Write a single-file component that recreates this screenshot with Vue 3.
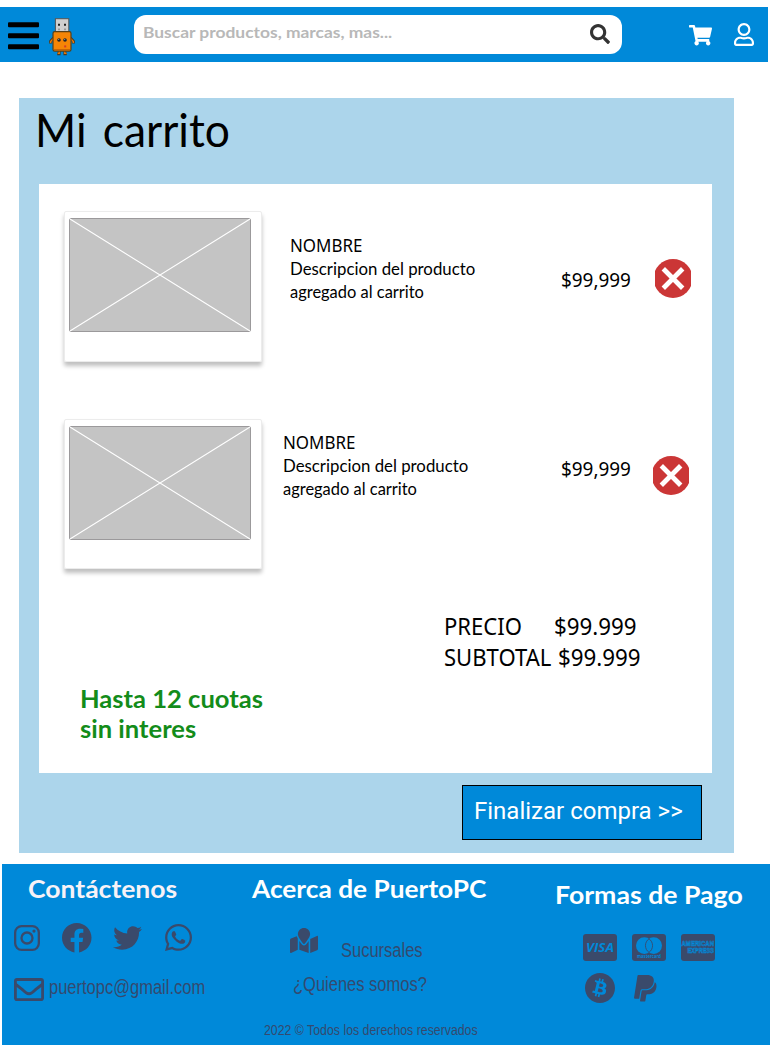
<script setup>
const items = [
  { id: 1, name: 'NOMBRE', line1: 'Descripcion del producto', line2: 'agregado al carrito', price: '$99,999' },
  { id: 2, name: 'NOMBRE', line1: 'Descripcion del producto', line2: 'agregado al carrito', price: '$99,999' },
]
</script>

<template>
  <div class="page">
    <header class="topbar">
      <svg class="menu" viewBox="0 0 31 28">
        <rect x="0" y="0.2" width="31" height="5" rx="1" />
        <rect x="0" y="11.2" width="31" height="5" rx="1" />
        <rect x="0" y="22.2" width="31" height="5" rx="1" />
      </svg>
      <svg class="mascot" viewBox="0 0 26 37">
        <path d="M4.5 20 L1.5 23.2 L1.5 25.5 M21.5 20 L24.5 23.2 L24.5 25.5" stroke="#4a3a20" stroke-width="2.8" fill="none" />
        <path d="M4.5 20.5 L1.7 23.5 L1.6 25 M21.5 20.5 L24.3 23.5 L24.4 25" stroke="#e8790a" stroke-width="1.5" fill="none" />
        <path d="M10.2 32v3.8H8.2M15.8 32v3.8h2" stroke="#4a3a20" stroke-width="2.8" fill="none" />
        <path d="M10.2 32v3.4H8.6M15.8 32v3.4h1.8" stroke="#e8790a" stroke-width="1.4" fill="none" />
        <rect x="6.4" y="0.7" width="13.4" height="14" fill="#cfcfcf" stroke="#555" stroke-width="1" />
        <path d="M9 5.8h2v2H9zM15 5.8h2v2h-2z" fill="#222" />
        <path d="M9 10.6h2v1.6H9zM15 10.6h2v1.6h-2z" fill="#999" />
        <rect x="4" y="13.7" width="18" height="19.4" rx="1.6" fill="#f58506" stroke="#574019" stroke-width="1.2" />
        <path d="M5 31.6h16" stroke="#c76505" stroke-width="1.2" />
        <circle cx="10" cy="22" r="1.8" fill="#20242b" />
        <circle cx="16" cy="22" r="1.8" fill="#20242b" />
        <path d="M9.2 21h1v1h-1zM15.2 21h1v1h-1z" fill="#8a9aa5" />
        <rect x="15.2" y="27.4" width="2" height="2" fill="#d43a2a" />
      </svg>
      <div class="search">
        <span class="t placeholder">Buscar productos, marcas, mas...</span>
        <svg class="lens" viewBox="0 0 512 512"><path fill="#333" d="M505 442.7L405.3 343c-4.500-4.500-10.600-7-17-7H372c27.600-35.300 44-79.700 44-128C416 93.100 322.900 0 208 0S0 93.100 0 208s93.100 208 208 208c48.300 0 92.700-16.400 128-44v16.300c0 6.400 2.500 12.500 7 17l99.700 99.700c9.400 9.400 24.600 9.400 33.900 0l28.300-28.300c9.400-9.400 9.400-24.600.1-34zM208 336c-70.700 0-128-57.200-128-128 0-70.700 57.200-128 128-128 70.700 0 128 57.200 128 128 0 70.700-57.200 128-128 128z" /></svg>
      </div>
      <svg class="cart" viewBox="0 0 576 512"><path fill="#fff" d="M528.12 301.319l47.273-208C578.806 78.301 567.391 64 551.99 64H159.208l-9.166-44.81C147.758 8.021 137.93 0 126.529 0H24C10.745 0 0 10.745 0 24v16c0 13.255 10.745 24 24 24h69.883l70.248 343.435C147.325 417.1 136 435.222 136 456c0 30.928 25.072 56 56 56s56-25.072 56-56c0-15.674-6.447-29.835-16.824-40h209.647C430.447 426.165 424 440.326 424 456c0 30.928 25.072 56 56 56s56-25.072 56-56c0-22.172-12.888-41.332-31.579-50.405l5.517-24.276c3.413-15.018-8.002-29.319-23.403-29.319H218.117l-6.545-32h293.145c11.206 0 20.92-7.754 23.403-18.681z" /></svg>
      <svg class="user" viewBox="0 0 448 512"><path fill="#fff" d="M313.600 304c-28.700 0-42.500 16-89.600 16-47.100 0-60.800-16-89.600-16C60.200 304 0 364.200 0 438.400V464c0 26.500 21.500 48 48 48h352c26.500 0 48-21.500 48-48v-25.600c0-74.200-60.200-134.400-134.400-134.400zM400 464H48v-25.600c0-47.600 38.800-86.400 86.400-86.400 14.600 0 38.300 16 89.600 16 51.700 0 74.900-16 89.600-16 47.600 0 86.400 38.800 86.400 86.400V464zM224 288c79.500 0 144-64.500 144-144S303.500 0 224 0 80 64.500 80 144s64.500 144 144 144zm0-240c52.900 0 96 43.100 96 96s-43.100 96-96 96-96-43.100-96-96 43.100-96 96-96z" /></svg>
    </header>

    <main class="panel">
      <h1 class="t title">Mi carrito</h1>
      <section class="sheet">
        <article v-for="item in items" :key="item.id" class="item" :class="`item-${item.id}`">
          <div class="photo">
            <svg class="cross" viewBox="0 0 182 114">
              <rect x="0.5" y="0.5" width="181" height="113" rx="1.5" fill="#c4c4c4" stroke="#9b999b" />
              <path d="M1 1L181 113M181 1L1 113" stroke="#fff" stroke-width="1.1" />
            </svg>
          </div>
          <div class="info">
            <p class="t name">{{ item.name }}</p>
            <p class="t line1">{{ item.line1 }}</p>
            <p class="t line2">{{ item.line2 }}</p>
          </div>
          <p class="price"><span class="t amount">{{ item.price }}</span></p>
          <svg class="remove" viewBox="0 0 36 39">
            <circle cx="18" cy="19.500" r="19.500" fill="#cb3636" />
            <path d="M8.300 9.800L27.700 29.200M27.700 9.800L8.300 29.200" stroke="#fff" stroke-width="4.800" />
          </svg>
        </article>

        <div class="totals">
          <div class="total-row"><span class="t label">PRECIO</span><span class="t value">$99.999</span></div>
          <div class="total-row sub"><span class="t label">SUBTOTAL</span><span class="t value">$99.999</span></div>
        </div>
        <div class="promo">
          <p class="t">Hasta 12 cuotas</p>
          <p class="t">sin interes</p>
        </div>
      </section>
      <button class="checkout">Finalizar compra &gt;&gt;</button>
    </main>

    <footer class="footer">
      <section class="contact">
        <h2 class="t">Contáctenos</h2>
        <div class="social">
          <svg class="ig" viewBox="0 0 26 26">
            <rect x="1.150" y="1.150" width="23.700" height="23.700" rx="6.500" fill="none" stroke="#3a4a6b" stroke-width="2.300" />
            <circle cx="13" cy="13" r="5.500" fill="none" stroke="#3a4a6b" stroke-width="2.300" />
            <circle cx="20" cy="6.100" r="1.600" fill="#3a4a6b" />
          </svg>
          <svg class="fb" viewBox="8 8 496 493"><path fill="#3a4a6b" d="M504 256C504 119 393 8 256 8S8 119 8 256c0 123.780 90.690 226.380 209.250 245V327.690h-63V256h63v-54.640c0-62.150 37-96.480 93.670-96.480 27.140 0 55.520 4.840 55.520 4.840v61h-31.280c-30.800 0-40.410 19.120-40.410 38.730V256h68.780l-11 71.690h-57.780V501C413.310 482.380 504 379.780 504 256z" /></svg>
          <svg class="tw" viewBox="0 48 512 416"><path fill="#3a4a6b" d="M459.370 151.716c.325 4.548.325 9.097.325 13.645 0 138.720-105.583 298.558-298.558 298.558-59.452 0-114.680-17.219-161.137-47.106 8.447.974 16.568 1.299 25.340 1.299 49.055 0 94.213-16.568 130.274-44.832-46.132-.975-84.792-31.188-98.112-72.772 6.498.974 12.995 1.624 19.818 1.624 9.421 0 18.843-1.300 27.614-3.573-48.081-9.747-84.143-51.980-84.143-102.985v-1.299c13.969 7.797 30.214 12.670 47.431 13.319-28.264-18.843-46.781-51.005-46.781-87.391 0-19.492 5.197-37.360 14.294-52.954 51.655 63.675 129.300 105.258 216.365 109.807-1.624-7.797-2.599-15.918-2.599-24.040 0-57.828 46.782-104.934 104.934-104.934 30.213 0 57.502 12.670 76.670 33.137 23.715-4.548 46.456-13.320 66.599-25.340-7.798 24.366-24.366 44.833-46.132 57.827 21.117-2.273 41.584-8.122 60.426-16.243-14.292 20.791-32.161 39.308-52.628 54.253z" /></svg>
          <svg class="wa" viewBox="0 32 448 448"><path fill="#3a4a6b" d="M380.900 97.100C339 55.100 283.200 32 223.900 32c-122.400 0-222 99.600-222 222 0 39.100 10.200 77.300 29.600 111L0 480l117.700-30.900c32.400 17.700 68.900 27 106.100 27h.1c122.300 0 224.100-99.600 224.100-222 0-59.300-25.200-115-67.100-157zm-157 341.600c-33.200 0-65.700-8.900-94-25.700l-6.700-4-69.800 18.300L72 359.200l-4.400-7c-18.500-29.400-28.200-63.300-28.200-98.200 0-101.700 82.800-184.500 184.600-184.500 49.300 0 95.600 19.200 130.400 54.100 34.800 34.900 56.200 81.200 56.100 130.500 0 101.800-84.900 184.600-186.600 184.600zm101.200-138.200c-5.500-2.800-32.800-16.200-37.900-18-5.100-1.900-8.800-2.800-12.500 2.800-3.700 5.600-14.300 18-17.600 21.800-3.200 3.700-6.500 4.200-12 1.400-32.600-16.300-54-29.100-75.500-66-5.700-9.800 5.700-9.100 16.300-30.300 1.800-3.700.9-6.900-.5-9.700-1.400-2.800-12.500-30.100-17.100-41.200-4.500-10.800-9.100-9.300-12.500-9.500-3.200-.2-6.900-.2-10.600-.2-3.700 0-9.700 1.400-14.800 6.900-5.100 5.600-19.400 19-19.400 46.300 0 27.300 19.900 53.700 22.600 57.400 2.800 3.700 39.100 59.700 94.800 83.800 35.200 15.200 49 16.500 66.600 13.900 10.700-1.600 32.800-13.400 37.400-26.400 4.600-13 4.600-24.100 3.200-26.400-1.300-2.500-5-3.900-10.500-6.600z" /></svg>
        </div>
        <div class="mail">
          <svg class="env" viewBox="0 64 512 384" preserveAspectRatio="none"><path fill="#3a4a6b" d="M464 64H48C21.490 64 0 85.490 0 112v288c0 26.510 21.490 48 48 48h416c26.510 0 48-21.490 48-48V112c0-26.510-21.490-48-48-48zm0 48v40.805c-22.422 18.259-58.168 46.651-134.587 106.490-16.841 13.247-50.201 45.072-73.413 44.701-23.208.375-56.579-31.459-73.413-44.701C106.180 199.465 70.425 171.067 48 152.805V112h416zM48 400V214.398c22.914 18.251 55.409 43.862 104.938 82.646 21.857 17.205 60.134 55.186 103.062 54.955 42.717.231 80.509-37.199 103.053-54.947 49.528-38.783 82.032-64.401 104.947-82.653V400H48z" /></svg>
          <span class="t link">puertopc@gmail.com</span>
        </div>
      </section>

      <section class="about">
        <h2 class="t">Acerca de PuertoPC</h2>
        <div class="branches">
          <svg class="map" viewBox="0 0 576 512"><path fill="#3a4a6b" d="M288 0c-69.590 0-126 56.410-126 126 0 56.260 82.350 158.800 113.900 196.020 6.390 7.540 17.820 7.540 24.200 0C331.650 284.800 414 182.260 414 126 414 56.410 357.590 0 288 0zM20.120 215.950A32.006 32.006 0 0 0 0 245.660v250.320c0 11.320 11.430 19.060 21.940 14.860L160 448V214.920c-8.840-15.980-16.070-31.540-21.250-46.420L20.120 215.950zM288 359.670c-14.070 0-27.380-6.180-36.510-16.960-19.660-23.200-40.570-49.620-59.490-76.720v182l192 64V266c-18.920 27.090-39.820 53.520-59.490 76.720-9.130 10.770-22.440 16.950-36.510 16.950zm266.060-198.510L416 224v288l139.880-55.950A31.996 31.996 0 0 0 576 426.340V176.020c0-11.320-11.430-19.060-21.940-14.860z" /></svg>
          <span class="t link">Sucursales</span>
        </div>
        <p class="t link who">¿Quienes somos?</p>
        <p class="t link copy">2022 © Todos los derechos reservados</p>
      </section>

      <section class="pay">
        <h2 class="t">Formas de Pago</h2>
        <div class="cards">
          <svg class="card" viewBox="0 0 34 27">
            <rect width="34" height="27" rx="3" fill="#3a4a6b" />
            <text x="3" y="18" class="visa" textLength="28" lengthAdjust="spacingAndGlyphs">VISA</text>
          </svg>
          <svg class="card" viewBox="0 0 34 27">
            <rect width="34" height="27" rx="3" fill="#3a4a6b" />
            <circle cx="12.300" cy="11.600" r="8.300" fill="#0089d9" />
            <circle cx="21.700" cy="11.600" r="8.300" fill="#0089d9" />
            <path d="M17 4.800a8.300 8.300 0 0 1 0 13.600a8.300 8.300 0 0 1 0-13.600z" fill="#0089d9" stroke="#3a4a6b" stroke-width="0.900" />
            <text x="5" y="24.300" class="master" textLength="24" lengthAdjust="spacingAndGlyphs">mastercard</text>
          </svg>
          <svg class="card" viewBox="0 0 34 27">
            <rect width="34" height="27" rx="3" fill="#3a4a6b" />
            <text x="0.500" y="11.800" class="amex" textLength="32.500" lengthAdjust="spacingAndGlyphs">AMERICAN</text>
            <text x="6.500" y="18.600" class="amex" textLength="26.500" lengthAdjust="spacingAndGlyphs">EXPRESS</text>
          </svg>
        </div>
        <div class="wallets">
          <svg class="btc" viewBox="8 8 496 496"><path fill="#3a4a6b" d="M504 256c0 136.967-111.033 248-248 248S8 392.967 8 256 119.033 8 256 8s248 111.033 248 248zm-141.651-35.330c4.937-32.999-20.191-50.739-54.550-62.573l11.146-44.702-27.213-6.781-10.851 43.524c-7.154-1.783-14.502-3.464-21.803-5.130l10.929-43.810-27.198-6.781-11.153 44.686c-5.922-1.349-11.735-2.682-17.377-4.084l.031-.14-37.530-9.370-7.239 29.062s20.191 4.627 19.765 4.913c11.022 2.751 13.014 10.044 12.680 15.825l-12.696 50.925c.76.194 1.744.473 2.829.907-.907-.225-1.876-.473-2.876-.713l-17.796 71.338c-1.349 3.348-4.767 8.370-12.471 6.464.271.395-19.780-4.937-19.780-4.937l-13.510 31.147 35.414 8.827c6.588 1.651 13.045 3.379 19.400 5.006l-11.262 45.213 27.182 6.781 11.153-44.733a1038.209 1038.209 0 0 0 21.687 5.627l-11.115 44.523 27.213 6.781 11.262-45.128c46.404 8.781 81.299 5.239 95.986-36.727 11.834-33.790-.589-53.281-25.004-65.991 17.780-4.098 31.174-15.792 34.747-39.949zm-62.177 87.179c-8.410 33.790-65.308 15.523-83.755 10.943l14.944-59.899c18.446 4.603 77.600 13.717 68.811 48.956zm8.417-87.667c-7.673 30.736-55.031 15.120-70.393 11.292l13.548-54.327c15.363 3.828 64.836 10.973 56.845 43.035z" /></svg>
          <svg class="pp" viewBox="0 29 384 452"><path fill="#3a4a6b" d="M111.400 295.900c-3.500 19.200-17.400 108.700-21.500 134-.3 1.800-1 2.500-3 2.500H12.300c-7.600 0-13.100-6.600-12.100-13.900L58.800 46.600c1.500-9.600 10.100-16.900 20-16.900 152.300 0 165.100-3.700 204 11.400 60.100 23.300 65.600 79.500 44 140.300-21.500 62.600-72.500 89.500-140.100 90.300-43.400.7-69.500-7-75.300 24.200zM357.100 152c-1.800-1.300-2.500-1.800-3 1.300-2 11.400-5.100 22.500-8.800 33.600-39.900 113.800-150.500 103.900-204.500 103.900-6.100 0-10.100 3.300-10.900 9.400-22.600 140.400-27.100 169.700-27.100 169.700-1 7.100 3.500 12.900 10.600 12.900h63.500c8.600 0 15.700-6.300 17.400-14.900.7-5.400-1.100 6.100 14.400-91.300 4.600-22 14.300-19.700 29.300-19.700 71 0 126.400-28.800 142.900-112.300 6.500-34.800 4.600-71.400-23.800-92.600z" /></svg>
        </div>
      </section>
    </footer>
  </div>
</template>

<style>
body {
  background: #fff;
}
</style>

<style scoped>
.page {
  width: 770px;
  height: 1045px;
  overflow: hidden;
  display: flex;
  flex-direction: column;
  padding-top: 7px;
  box-sizing: border-box;
}
h1, h2, p { margin: 0; font-weight: 400; }
svg { display: block; flex: none; overflow: visible; }

/* condensed or widened text, anchored at its left edge */
.t {
  display: block;
  white-space: nowrap;
  transform-origin: 0 50%;
}

.topbar {
  display: flex;
  align-items: flex-start;
  width: 768px;
  height: 55px;
  flex: none;
  background: #0089d9;
}
.menu { width: 31px; height: 28px; margin: 15px 0 0 8px; }
.mascot { width: 26px; height: 37px; margin: 10.500px 0 0 10px; }
.search {
  display: flex;
  width: 488px;
  height: 39px;
  margin: 8px 0 0 59px;
  border-radius: 12px;
  background: #fff;
  flex: none;
}
.placeholder {
  width: 447px;
  margin-left: 9px;
  font: 700 16px/34px Lato, sans-serif;
  color: #b8b8b8;
  transform: scaleX(1.088);
}
.lens { width: 20px; height: 20px; margin-top: 8.500px; }
.cart { width: 23px; height: 20.500px; margin: 18px 0 0 67px; }
.user { width: 20px; height: 23px; margin: 16px 0 0 22px; }

.panel {
  width: 715px;
  height: 755px;
  margin: 36px 0 0 19px;
  flex: none;
  display: flex;
  flex-direction: column;
  background: #acd5eb;
  color: #000;
}
.title {
  width: 300px;
  height: 60px;
  margin: 2px 0 24px 15.500px;
  font: 400 46px/60px Lato, sans-serif;
  word-spacing: 5px;
  transform: scaleX(0.965);
}
.sheet {
  display: flex;
  flex-direction: column;
  width: 673px;
  height: 589px;
  margin-left: 20px;
  flex: none;
  background: #fff;
}
.item {
  display: flex;
  align-items: flex-start;
  height: 151px;
  margin: 27px 0 0 25px;
  flex: none;
}
.item-2 { margin-top: 57px; }
.photo {
  box-sizing: border-box;
  width: 198px;
  height: 151px;
  padding: 6px 0 0 4px;
  border: 1px solid #ececec;
  border-radius: 2px;
  box-shadow: 0 4px 4px rgba(0, 0, 0, 0.25);
  flex: none;
}
.item-2 .photo { height: 150px; }
.cross { width: 182px; height: 114px; }
.info {
  width: 259px;
  margin: 23px 0 0 27.500px;
  font: 400 17.500px/23px Lato, sans-serif;
}
.item-2 .info { width: 266px; margin: 12px 0 0 20.500px; }
.name { font: 400 18px/23px "Noto Sans", sans-serif; transform: scaleX(0.94); }
.line1 { transform: scaleX(0.96); }
.line2 { transform: scaleX(0.94); }
.price {
  width: 94px;
  margin: 57px 0 0 12px;
  font: 400 20px/24px "Noto Sans", sans-serif;
}
.amount { transform: scaleX(0.945); }
.item-2 .price { width: 92px; margin-top: 38px; }
.remove { width: 36px; height: 39px; margin-top: 48px; overflow: hidden; }
.item-2 .remove { margin-top: 37px; }

.totals {
  margin: 40px 0 0 404.500px;
  font: 400 24px/31px "Noto Sans", sans-serif;
}
.total-row { display: flex; }
.total-row .label { width: 110px; transform: scaleX(0.92); }
.total-row .value { transform: scaleX(0.93); }
.sub .label { width: 114px; transform: scaleX(0.92); }
.promo {
  margin: 11.500px 0 0 41px;
  font: 700 24px/30px Lato, sans-serif;
  color: #138c1a;
}
.promo .t { font-weight: 700; transform: scaleX(1.065); }

.checkout {
  width: 240px;
  height: 55px;
  margin: 12px 0 0 443px;
  padding: 0 0 2px 11px;
  box-sizing: border-box;
  border: 1px solid #000;
  background: #0089d9;
  color: #fff;
  font: 400 24px/51px Roboto, sans-serif;
  text-align: left;
  white-space: nowrap;
}

.footer {
  display: flex;
  width: 768px;
  height: 181px;
  margin: 11px 0 0 2px;
  flex: none;
  background: #0089d9;
}
h2 { font: 700 24px/30px Lato, sans-serif; color: #fff; }
.link { font: 400 20px/24px "Liberation Sans", Arial, sans-serif; color: #34496f; transform: scaleX(0.825); }

.contact { width: 250px; padding: 10px 0 0 12px; box-sizing: border-box; }
.contact h2 { margin-left: 13.500px; transform: scaleX(1.105); color: #f7f2f7; }
.social { display: flex; height: 30px; margin-top: 19px; }
.ig { width: 26px; height: 26px; margin-top: 2px; }
.fb { width: 29.500px; height: 29.500px; margin-left: 22px; }
.tw { width: 29px; height: 24px; margin: 2.500px 0 0 21px; }
.wa { width: 27px; height: 27px; margin: 1px 0 0 23px; }
.mail { display: flex; margin-top: 22px; }
.env { width: 30px; height: 23px; margin-top: 3px; }
.mail .link { margin-left: 5px; }

.about { width: 300px; padding-top: 10px; box-sizing: border-box; }
.about h2 { transform: scaleX(1.095); }
.branches { display: flex; margin-top: 24px; }
.map { width: 28px; height: 25px; margin-left: 38px; }
.branches .link { margin: 10px 0 0 23px; }
.who { margin: 10px 0 0 41px; }
.copy { margin: 24px 0 0 11.500px; font-size: 14px; line-height: 20px; transform: scaleX(0.88); }

.pay { padding-top: 16px; }
.pay h2 { width: 180px; margin-left: 3px; transform: scaleX(1.11); }
.cards { display: flex; gap: 15px; margin: 24px 0 0 31px; }
.card { width: 34px; height: 27px; }
.visa { font: italic 700 13px "Open Sans", sans-serif; fill: #0089d9; }
.master { font: 700 4.500px "Open Sans", sans-serif; fill: #0089d9; }
.amex { font: 700 7px "Liberation Sans", sans-serif; fill: none; stroke: #0089d9; stroke-width: 0.600px; }
.wallets { display: flex; margin: 12px 0 0 33px; }
.btc { width: 30px; height: 30px; }
.pp { width: 22.500px; height: 26.500px; margin: 1.500px 0 0 19px; }
</style>
